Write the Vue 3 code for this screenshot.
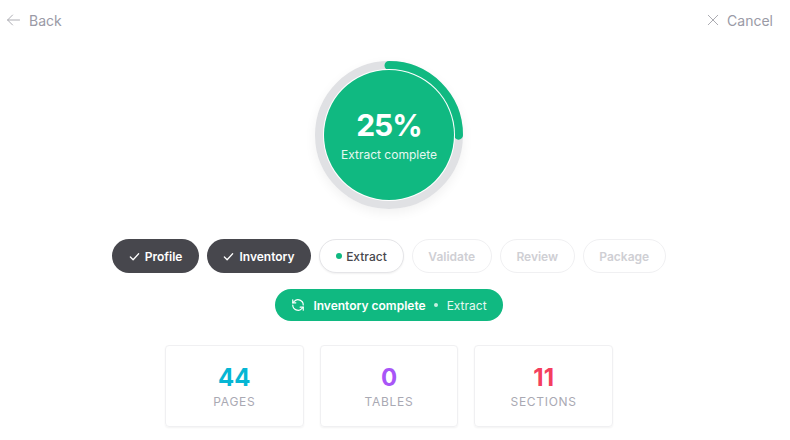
<template>
  <div class="page">
    <header class="topbar">
      <button class="link">
        <svg width="14" height="14" viewBox="0 0 24 24" fill="none" stroke="currentColor" stroke-width="1.7" stroke-linecap="round" stroke-linejoin="round">
          <path d="M21.5 12H1M9.5 3.5L1 12l8.5 8.5" />
        </svg>
        <span>Back</span>
      </button>
      <button class="link">
        <svg width="12" height="12" viewBox="0 0 24 24" fill="none" stroke="currentColor" stroke-width="2" stroke-linecap="round">
          <path d="M2.5 2.5l19 19M21.5 2.5l-19 19" />
        </svg>
        <span>Cancel</span>
      </button>
    </header>

    <div class="ring-wrap">
      <svg class="ring" width="148" height="148" viewBox="0 0 148 148">
        <circle cx="74" cy="74" r="69.5" fill="none" stroke="#e0e1e4" stroke-width="9" />
        <circle
          cx="74"
          cy="74"
          r="69.5"
          fill="none"
          stroke="#10b981"
          stroke-width="9"
          stroke-linecap="round"
          :stroke-dasharray="dash"
          transform="rotate(-90 74 74)"
        />
      </svg>
      <div class="ring-inner">
        <div class="percent">{{ percent }}%</div>
        <div class="ring-label">Extract complete</div>
      </div>
    </div>

    <div class="steps">
      <div v-for="step in steps" :key="step.name" class="step" :class="'step--' + step.state">
        <svg v-if="step.state === 'done'" width="11" height="11" viewBox="0 0 24 24" fill="none" stroke="currentColor" stroke-width="2.8" stroke-linecap="round" stroke-linejoin="round">
          <path d="M3 13l6 6L21 6" />
        </svg>
        <span v-if="step.state === 'active'" class="dot"></span>
        <span>{{ step.name }}</span>
      </div>
    </div>

    <div class="banner">
      <svg width="14" height="14" viewBox="0 0 24 24" fill="none" stroke="currentColor" stroke-width="2" stroke-linecap="round" stroke-linejoin="round">
        <path d="M21 12a9 9 0 0 0-15.5-6.2L3 8.3" />
        <path d="M3 3v5.3h5.3" />
        <path d="M3 12a9 9 0 0 0 15.5 6.2l2.5-2.5" />
        <path d="M21 21v-5.3h-5.3" />
      </svg>
      <span class="banner-title">Inventory complete</span>
      <span class="banner-dot"></span>
      <span class="banner-sub">Extract</span>
    </div>

    <div class="stats">
      <div v-for="stat in stats" :key="stat.label" class="stat">
        <div class="stat-value" :class="stat.color">{{ stat.value }}</div>
        <div class="stat-label">{{ stat.label }}</div>
      </div>
    </div>
  </div>
</template>

<script setup>
import { computed } from 'vue'

const percent = 25

// circumference of the r=69.5 ring
const dash = computed(() => {
  const full = 2 * Math.PI * 69.5
  return `${(full * percent) / 100} ${full}`
})

const steps = [
  { name: 'Profile', state: 'done' },
  { name: 'Inventory', state: 'done' },
  { name: 'Extract', state: 'active' },
  { name: 'Validate', state: 'todo' },
  { name: 'Review', state: 'todo' },
  { name: 'Package', state: 'todo' }
]

const stats = [
  { label: 'PAGES', value: 44, color: 'cyan' },
  { label: 'TABLES', value: 0, color: 'purple' },
  { label: 'SECTIONS', value: 11, color: 'red' }
]
</script>

<style>
html,
body {
  margin: 0;
  background: #fff;
}
</style>

<style scoped>
.page {
  width: 778px;
  height: 440px;
  overflow: hidden;
  box-sizing: border-box;
  padding-top: 11px;
  display: flex;
  flex-direction: column;
  align-items: center;
  font-family: Inter, "Liberation Sans", sans-serif;
  background: #fff;
}

.topbar {
  width: 100%;
  height: 18px;
  box-sizing: border-box;
  padding: 0 5px 0 7px;
  display: flex;
  justify-content: space-between;
  align-items: center;
}

.link {
  display: flex;
  align-items: center;
  gap: 8px;
  border: 0;
  padding: 0;
  background: none;
  font: inherit;
  font-size: 14px;
  color: #9a9aa6;
}

.link svg {
  color: #acacb2;
}

.ring-wrap {
  position: relative;
  width: 148px;
  height: 148px;
  margin-top: 32px;
  flex-shrink: 0;
  border-radius: 50%;
  box-shadow: 0 4px 12px rgba(0, 0, 0, 0.06);
}

.ring {
  display: block;
}

.ring-inner {
  position: absolute;
  top: 9px;
  left: 9px;
  width: 130px;
  height: 130px;
  border-radius: 50%;
  background: #10b981;
  box-shadow: 0 0 0 1px #fff;
  color: #fff;
  display: flex;
  flex-direction: column;
  align-items: center;
  justify-content: center;
}

.percent {
  font-size: 30px;
  font-weight: 700;
  line-height: 36px;
  letter-spacing: -1px;
  margin-top: -1px;
}

.ring-label {
  font-size: 12px;
  line-height: 16px;
  margin-top: 4px;
  color: #e6f8f1;
}

.steps {
  display: flex;
  gap: 8px;
  margin-top: 30px;
}

.step {
  height: 34px;
  box-sizing: border-box;
  padding: 0 16px;
  border-radius: 17px;
  display: flex;
  align-items: center;
  gap: 5px;
  font-size: 12px;
  font-weight: 600;
}

.step--done {
  padding: 0 16.5px;
  background: #47474d;
  color: #fff;
}

.step--active {
  gap: 4px;
  background: #fff;
  color: #47474d;
  font-weight: 500;
  border: 1px solid #e5e5e8;
  box-shadow: 0 1px 2px rgba(0, 0, 0, 0.06);
}

.step--todo {
  padding: 0 15.6px;
  background: #fff;
  color: #cfcfd4;
  border: 1px solid #f0f0f2;
}

.dot {
  width: 6px;
  height: 6px;
  border-radius: 50%;
  background: #10b981;
}

.banner {
  height: 32px;
  margin-top: 16px;
  padding: 0 16px;
  border-radius: 16px;
  background: #10b981;
  color: #fff;
  display: flex;
  align-items: center;
  font-size: 12px;
}

.banner-title {
  margin-left: 8px;
  font-weight: 600;
}

.banner-dot {
  width: 4px;
  height: 4px;
  margin: 0 8.5px;
  border-radius: 50%;
  background: #c5f0df;
}

.banner-sub {
  color: #e6f8f1;
}

.stats {
  display: flex;
  gap: 16px;
  margin-top: 24px;
}

.stat {
  width: 138.67px;
  height: 82px;
  box-sizing: border-box;
  border: 1px solid #f0f0f2;
  border-radius: 4px;
  box-shadow: 0 1px 2px rgba(0, 0, 0, 0.05);
  display: flex;
  flex-direction: column;
  align-items: center;
  justify-content: center;
}

.stat-value {
  font-size: 24px;
  font-weight: 700;
  line-height: 32px;
}

.stat-label {
  font-size: 12px;
  line-height: 16px;
  letter-spacing: 0.7px;
  color: #a9a9b3;
}

.cyan {
  color: #06b6d4;
}

.purple {
  color: #a855f7;
}

.red {
  color: #f43f5e;
}
</style>
